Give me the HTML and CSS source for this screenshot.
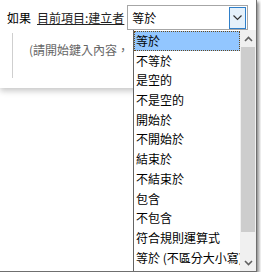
FILE: index.html
```html
<!DOCTYPE html>
<html lang="zh-Hant">
<head>
  <meta charset="UTF-8">
  <title>規則條件</title>
  <link rel="stylesheet" href="styles.css">
</head>
<body>
  <div class="screen">
    <div class="panel">
      <div class="rule">
        <span class="label">如果</span>
        <a class="field" href="#">目前項目:建立者</a>
        <div class="select">
          <span class="select-value">等於</span>
          <span class="select-btn">
            <svg width="9" height="6" viewBox="0 0 9 6"><path d="M0.5 0.5 L4.5 4.5 L8.5 0.5" fill="none" stroke="#333" stroke-width="1.2"/></svg>
          </span>
        </div>
      </div>
      <div class="rule-body">
        <p class="hint">(請開始鍵入內容，</p>
      </div>
    </div>

    <div class="options">
      <ul class="option-list">
        <li class="option selected">等於</li>
        <li class="option">不等於</li>
        <li class="option">是空的</li>
        <li class="option">不是空的</li>
        <li class="option">開始於</li>
        <li class="option">不開始於</li>
        <li class="option">結束於</li>
        <li class="option">不結束於</li>
        <li class="option">包含</li>
        <li class="option">不包含</li>
        <li class="option">符合規則運算式</li>
        <li class="option">等於 (不區分大小寫)</li>
      </ul>
      <div class="scrollbar">
        <span class="arrow">
          <svg width="9" height="6" viewBox="0 0 9 6"><path d="M1 5 L4.5 1.5 L8 5" fill="none" stroke="#606060" stroke-width="1.6"/></svg>
        </span>
        <span class="thumb"></span>
        <span class="track"></span>
        <span class="arrow">
          <svg width="9" height="6" viewBox="0 0 9 6"><path d="M1 1 L4.5 4.5 L8 1" fill="none" stroke="#606060" stroke-width="1.6"/></svg>
        </span>
      </div>
    </div>
  </div>
</body>
</html>
```

FILE: styles.css
```css
body {
  margin: 0;
  background: #fff;
  font-family: "Noto Sans CJK TC", "Noto Sans", sans-serif;
  font-size: 12px;
  color: #000;
}
.screen {
  position: relative;
  width: 256px;
  height: 271px;
  background: #fff;
  border-right: 1px solid #6f6f6f;
  border-bottom: 1px solid #6f6f6f;
  box-shadow: 2px 2px 3px rgba(0,0,0,0.45);
  overflow: hidden;
}
.panel {
  height: 88px;
  background: #fff;
  box-shadow: 0 3px 6px rgba(0,0,0,0.22);
}
.rule {
  display: flex;
  align-items: center;
  padding: 5px 0 0 7px;
  height: 25px;
}
.label {
  margin-right: 6px;
}
.field {
  color: #222;
  text-decoration: underline;
  margin-right: 3px;
}
.select {
  display: flex;
  align-items: center;
  justify-content: space-between;
  width: 119px;
  height: 23px;
  border: 1px solid #a6a6a6;
  background: #fff;
}
.select-value {
  padding-left: 4px;
}
.select-btn {
  display: flex;
  align-items: center;
  justify-content: center;
  width: 15px;
  height: 20px;
  margin-right: 1px;
  border: 1px solid #2f7fc9;
  background: #e5f1fb;
}
.rule-body {
  margin: 3px 0 0 12px;
  width: 120px;
  height: 45px;
  border-left: 1px solid #cfcfcf;
  overflow: hidden;
}
.hint {
  margin: 0;
  padding: 8px 0 0 16px;
  color: #666;
  white-space: nowrap;
}
/* dropdown overlays the panel */
.options {
  position: absolute;
  left: 133px;
  top: 30px;
  right: 0;
  bottom: 0;
  display: flex;
  background: #fff;
  border-left: 1px solid #646464;
}
.option-list {
  list-style: none;
  margin: 0;
  padding: 1px 0 0;
  flex: 1;
  min-width: 0;
  overflow: hidden;
}
.option {
  height: 19.7px;
  line-height: 19.7px;
  padding-left: 2px;
  white-space: nowrap;
  overflow: hidden;
}
.option.selected {
  background: #92c6ff;
  outline: 1px dotted #6b4a1c;
  outline-offset: -1px;
}
.scrollbar {
  width: 16px;
  display: flex;
  flex-direction: column;
  background: #f0f0f0;
}
.arrow {
  height: 17px;
  display: flex;
  align-items: center;
  justify-content: center;
}
.thumb {
  height: 185px;
  margin: 0 1px;
  background: #cdcdcd;
}
.track {
  flex: 1;
}
```
